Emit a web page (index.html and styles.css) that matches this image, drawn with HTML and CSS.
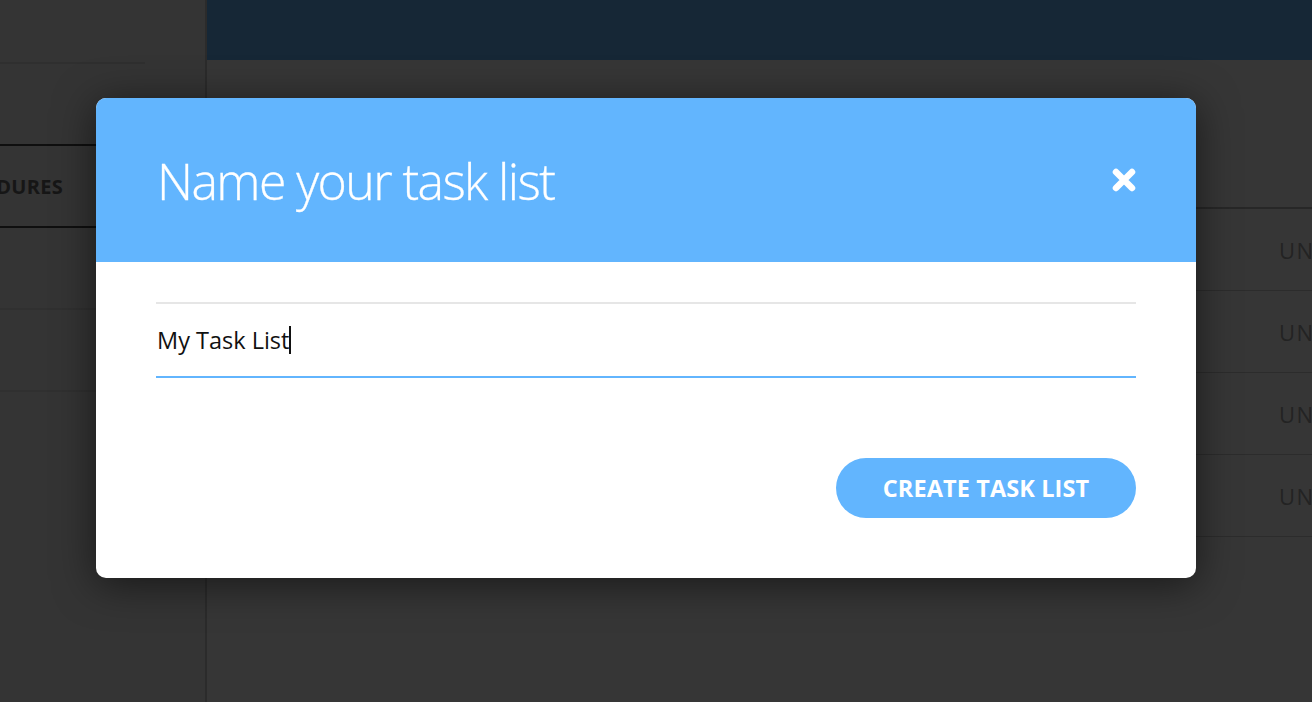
FILE: index.html
```html
<!DOCTYPE html>
<html lang="en">
<head>
<meta charset="utf-8">
<title>Name your task list</title>
<link rel="stylesheet" href="styles.css">
</head>
<body>
<div class="app">
  <aside class="sidebar">
    <div class="side-top"></div>
    <div class="side-gap"></div>
    <div class="side-tab"><span class="tab-label">PROCEDURES</span></div>
    <div class="side-row"></div>
    <div class="side-row"></div>
  </aside>
  <main class="main">
    <header class="topbar"></header>
    <div class="table">
      <div class="thead"></div>
      <div class="trow"><span class="status">UNASSIGNED</span></div>
      <div class="trow"><span class="status">UNASSIGNED</span></div>
      <div class="trow"><span class="status">UNASSIGNED</span></div>
      <div class="trow"><span class="status">UNASSIGNED</span></div>
    </div>
  </main>
</div>
<div class="overlay"></div>
<div class="modal">
  <div class="modal-head">
    <h1 class="modal-title">Name your task list</h1>
    <button class="close" aria-label="Close">
      <svg width="26" height="26" viewBox="0 0 26 26"><path d="M5 5 L21 21 M21 5 L5 21" stroke="#fff" stroke-width="6.5" stroke-linecap="round"/></svg>
    </button>
  </div>
  <div class="modal-body">
    <div class="field"><span class="field-text">My Task List</span><span class="caret"></span></div>
    <div class="actions"><button class="primary">CREATE TASK LIST</button></div>
  </div>
</div>
</body>
</html>
```
FILE: styles.css
```css
* { box-sizing: border-box; }
html, body { margin: 0; height: 100%; }
body {
  font-family: "Open Sans", "Noto Sans", sans-serif;
  background: #fff;
  overflow: hidden;
  width: 1312px;
  height: 702px;
  position: relative;
}
.app { display: flex; height: 702px; }
.sidebar {
  width: 207px;
  flex: none;
  background: #f4f4f4;
  border-right: 2px solid #cbcbcb;
  display: flex;
  flex-direction: column;
}
.side-top { height: 64px; border-bottom: 2px solid #dcdcdc; margin-right: 60px; }
.side-gap { height: 80px; }
.side-tab {
  height: 84px;
  border-top: 2px solid #4a4a4a;
  border-bottom: 2px solid #4a4a4a;
  display: flex;
  align-items: center;
}
.tab-label {
  display: flex;
  justify-content: flex-end;
  width: 63px;
  overflow: hidden;
  white-space: nowrap;
  font-weight: 700;
  font-size: 20px;
  color: #6a6a6a;
  letter-spacing: 0.3px;
}
.side-row { height: 82px; border-bottom: 2px solid #e2e2e2; }
.main { flex: 1; display: flex; flex-direction: column; min-width: 0; }
.topbar { height: 60px; background: #67b8ff; }
.table { padding-top: 147px; }
.thead { border-top: 2px solid #b8b8b8; }
.trow {
  height: 82px;
  border-bottom: 1px solid #cdcdcd;
  display: flex;
  align-items: center;
  justify-content: flex-end;
  overflow: hidden;
}
.status {
  flex: none;
  width: 33px;
  overflow: hidden;
  white-space: nowrap;
  font-size: 22px;
  font-weight: 400;
  color: #a3a3a3;
  letter-spacing: 1.5px;
}
.overlay {
  position: absolute;
  inset: 0;
  background: rgba(0, 0, 0, 0.79);
}
.modal {
  position: absolute;
  left: 96px;
  top: 98px;
  width: 1100px;
  height: 480px;
  background: #fff;
  border-radius: 10px;
  overflow: hidden;
  box-shadow: 0 6px 40px rgba(0, 0, 0, 0.55);
}
.modal-head {
  height: 164px;
  background: #62b5fe;
  display: flex;
  align-items: center;
  justify-content: space-between;
  padding: 0 59px 0 61px;
}
.modal-title {
  margin: 0;
  font-weight: 300;
  font-size: 50px;
  letter-spacing: -1.6px;
  color: #fff;
  line-height: 1;
  padding-top: 2px;
  -webkit-text-stroke: 0.3px #fff;
}
.close {
  background: none;
  border: 0;
  padding: 0;
  width: 26px;
  height: 26px;
  display: flex;
  filter: blur(0.5px);
  margin-top: 0;
}
.modal-body { padding: 40px 60px 60px; }
.field {
  height: 76px;
  border-top: 2px solid #e6e6e6;
  border-bottom: 2px solid #62b5fe;
  display: flex;
  align-items: center;
  padding-left: 1px;
}
.field-text { font-size: 23.5px; color: #111; }
.caret { width: 2px; height: 28px; background: #111; margin-left: 0; }
.actions { display: flex; justify-content: flex-end; padding-top: 80px; }
.primary {
  width: 300px;
  height: 60px;
  border: 0;
  border-radius: 30px;
  background: #62b5fe;
  color: #fff;
  font-family: "Open Sans", "Noto Sans", sans-serif;
  font-weight: 700;
  font-size: 23.5px;
  letter-spacing: 0.1px;
  padding: 0;
}
```
